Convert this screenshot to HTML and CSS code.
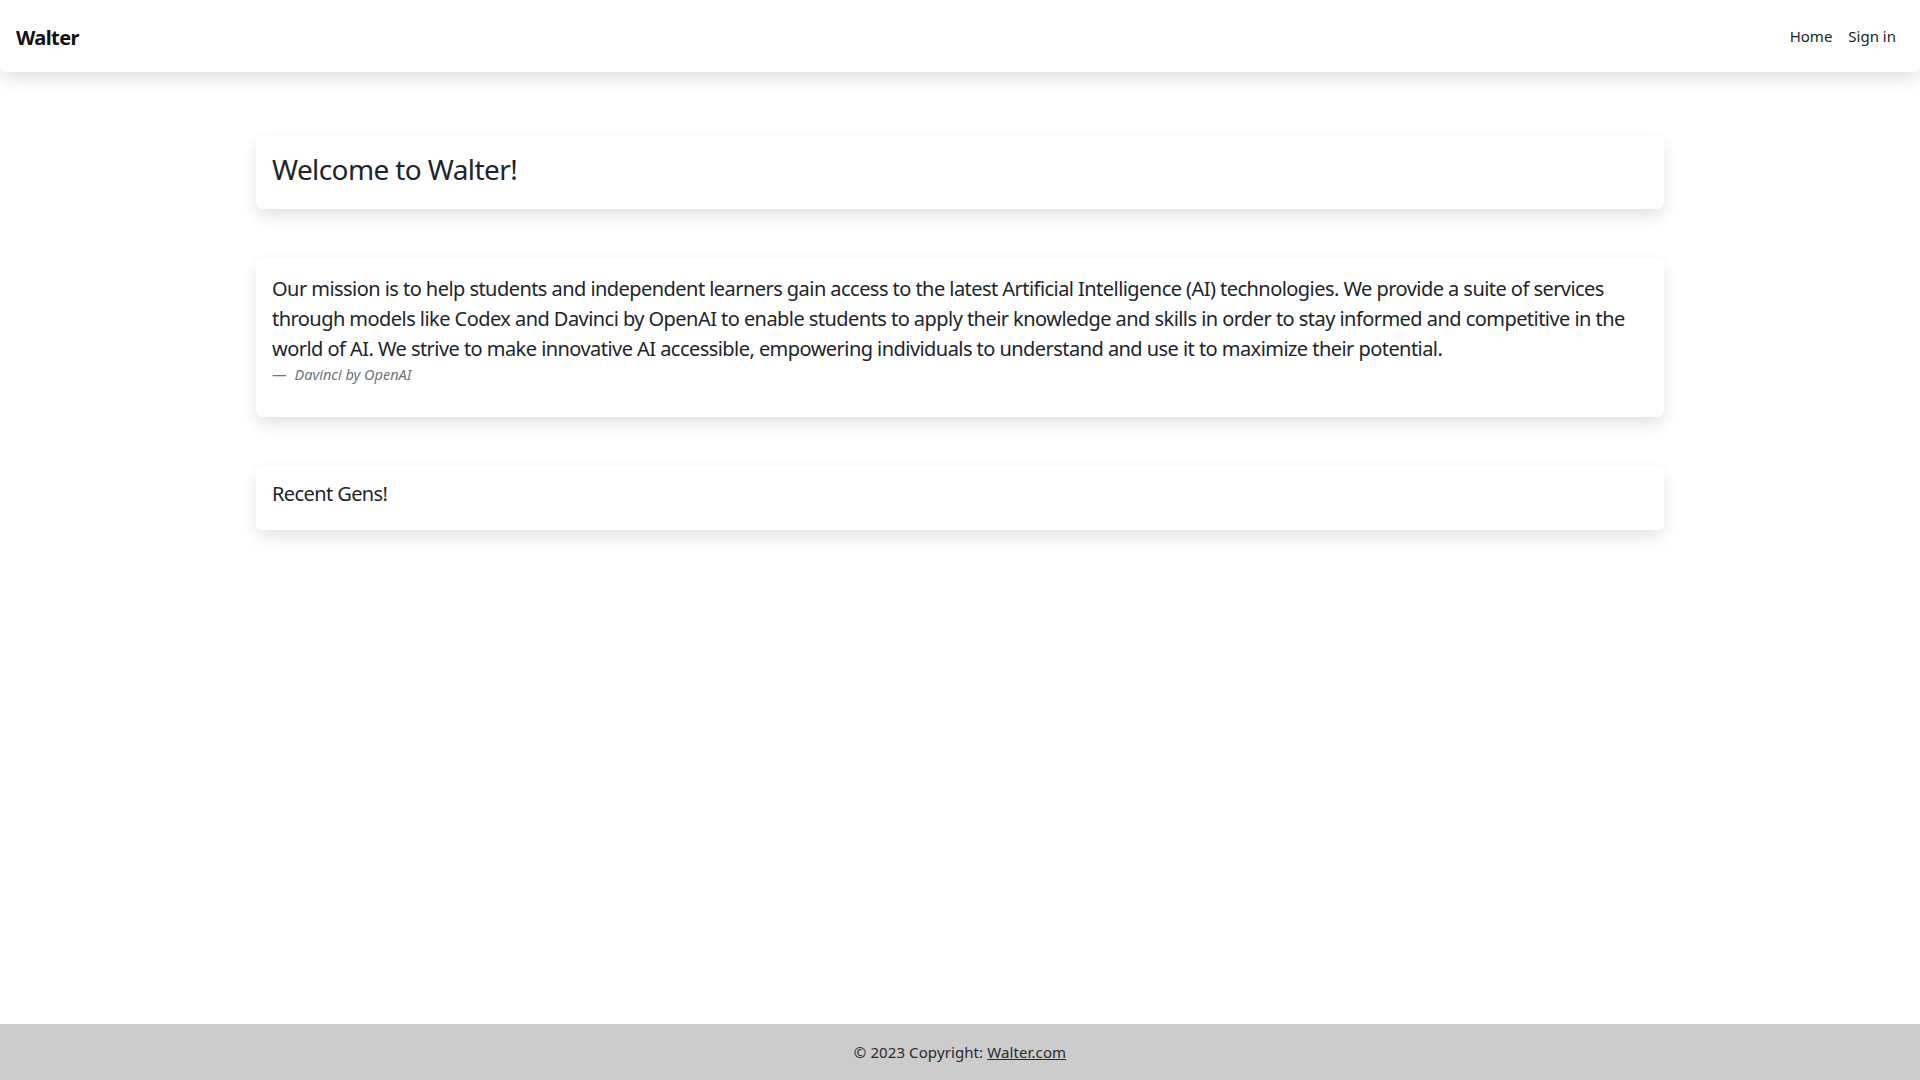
FILE: index.html
```html
<!DOCTYPE html>
<html lang="en">

<head>
    <meta charset="UTF-8">
    <meta name="viewport" content="width=device-width, initial-scale=1.0">
    <title>Walter</title>
    <link rel="stylesheet" href="styles.css">
</head>

<body>
    <header class="navbar">
        <a class="brand" href="#">Walter</a>
        <nav class="nav-links">
            <a href="#">Home</a>
            <a href="#">Sign in</a>
        </nav>
    </header>
    <div class="toast-ghost"></div>

    <main class="container">
        <section class="card">
            <div class="card-body">
                <h3 class="card-title">Welcome to Walter!</h3>
            </div>
        </section>

        <section class="card">
            <div class="card-body">
                <figure class="quote">
                    <blockquote>
                        <p>Our mission is to help students and independent learners gain access to the latest Artificial Intelligence (AI) technologies. We provide a suite of services through models like Codex and Davinci by OpenAI to enable students to apply their knowledge and skills in order to stay informed and competitive in the world of AI. We strive to make innovative AI accessible, empowering individuals to understand and use it to maximize their potential.</p>
                    </blockquote>
                    <figcaption class="quote-footer">Davinci by OpenAI</figcaption>
                </figure>
            </div>
        </section>

        <section class="card">
            <div class="card-body">
                <h5 class="card-subtitle">Recent Gens!</h5>
            </div>
        </section>
    </main>

    <footer class="footer">
        © 2023 Copyright: <a href="#">Walter.com</a>
    </footer>
</body>

</html>
```

FILE: styles.css
```css
body {
    margin: 0;
    padding: 0;
    min-height: 100vh;
    display: flex;
    flex-direction: column;
    font-family: "Noto Sans", "Open Sans", sans-serif;
    font-size: 16px;
    line-height: 1.5;
    color: #212529;
    background: #fff;
}

a {
    color: inherit;
    text-decoration: none;
}

.navbar {
    display: flex;
    align-items: center;
    justify-content: space-between;
    height: 72px;
    padding: 0 16px;
    background: #fff;
    border-radius: 0 0 6px 6px;
    box-shadow: 0 2px 15px -3px rgba(0, 0, 0, 0.07), 0 10px 20px -2px rgba(0, 0, 0, 0.09);
    position: relative;
    z-index: 2;
}

.brand {
    margin-top: 4px;
    font-size: 20px;
    font-weight: bold;
    color: #111;
    letter-spacing: -0.6px;
}

.nav-links {
    display: flex;
}

.nav-links a {
    padding: 0 8px;
    font-size: 15px;
    color: #222;
}

.toast-ghost {
    position: absolute;
    top: -60px;
    left: 847px;
    width: 226px;
    height: 60px;
    box-shadow: 0 2px 10px rgba(0, 0, 0, 0.06);
}

.container {
    flex: 1;
    width: 1408px;
    margin: 0 auto;
    padding-top: 64px;
}

.card {
    background: #fff;
    border-radius: 6px;
    box-shadow: 0 2px 15px -3px rgba(0, 0, 0, 0.07), 0 10px 20px -2px rgba(0, 0, 0, 0.09);
    margin-bottom: 49px;
}

.card-body {
    padding: 16px;
}

.card-title {
    margin: 1px 0 6px;
    font-size: 28px;
    font-weight: 400;
    line-height: 1.2;
    letter-spacing: -0.6px;
}

.card-subtitle {
    margin: 0 0 8px;
    font-size: 20px;
    font-weight: 400;
    line-height: 1.2;
    letter-spacing: -0.6px;
}

.quote {
    margin: 0;
}

.quote blockquote {
    margin: 0;
    font-size: 20px;
    line-height: 30px;
    letter-spacing: -0.55px;
}

.quote blockquote p {
    margin: 0;
}

.quote-footer {
    margin-bottom: 16px;
    font-size: 14.5px;
    line-height: 21px;
    font-style: italic;
    color: #6c757d;
}

.quote-footer::before {
    content: "\2014";
    font-style: normal;
    margin-right: 8px;
}

.footer {
    background: rgba(0, 0, 0, 0.2);
    text-align: center;
    padding: 16px;
    line-height: 24px;
    font-size: 15px;
    letter-spacing: 0.1px;
    color: #2a2a2a;
}

.footer a {
    text-decoration: underline;
}
```
